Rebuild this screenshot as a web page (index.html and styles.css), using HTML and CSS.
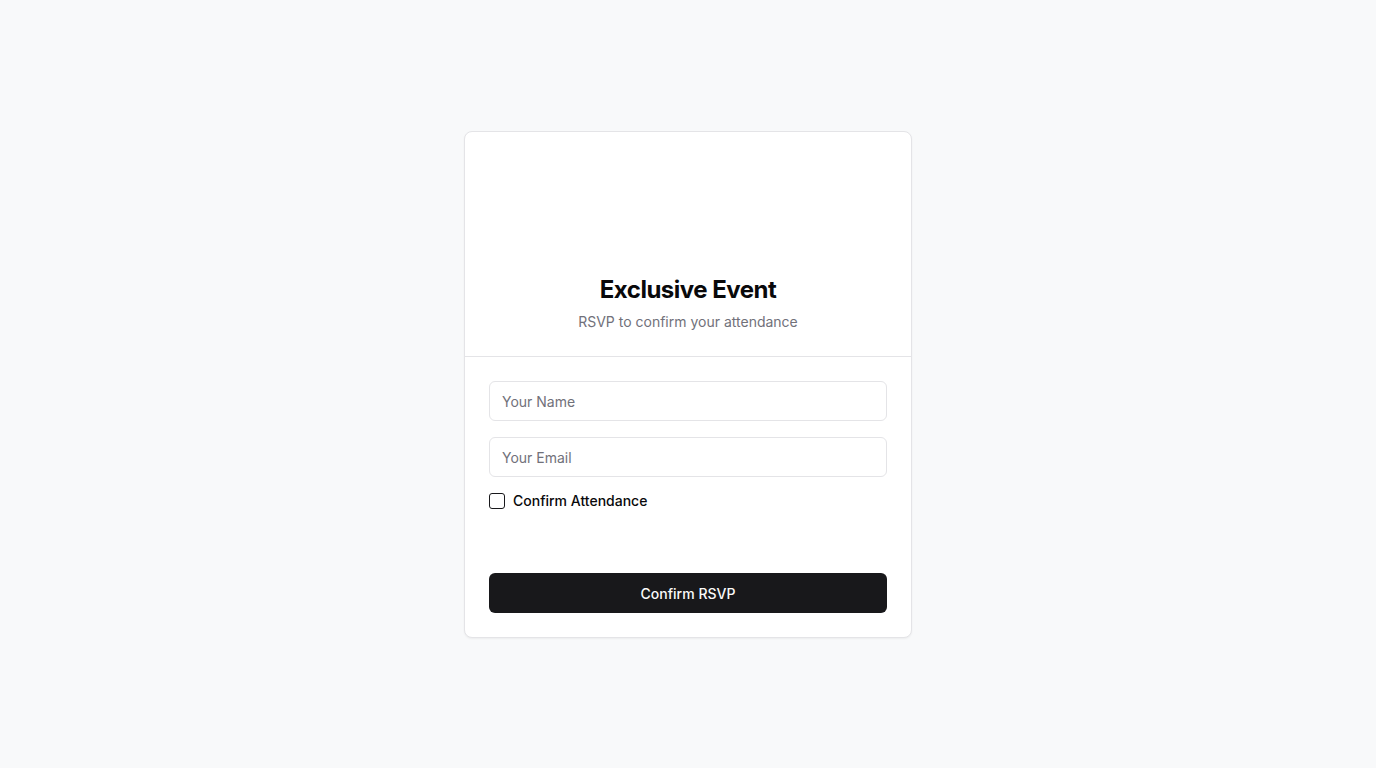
FILE: index.html
```html
<!DOCTYPE html>
<html lang="en">
<head>
<meta charset="utf-8">
<title>Exclusive Event RSVP</title>
<link rel="stylesheet" href="styles.css">
</head>
<body>
<main class="page">
  <div class="card">
    <div class="card-header">
      <div class="banner"></div>
      <h1 class="title">Exclusive Event</h1>
      <p class="subtitle">RSVP to confirm your attendance</p>
    </div>
    <form class="card-content">
      <input class="input" type="text" placeholder="Your Name">
      <input class="input" type="email" placeholder="Your Email">
      <label class="check-row">
        <span class="checkbox"></span>
        <span class="check-label">Confirm Attendance</span>
      </label>
      <button class="button" type="button">Confirm RSVP</button>
    </form>
  </div>
</main>
</body>
</html>
```
FILE: styles.css
```css
* { box-sizing: border-box; }
html, body { margin: 0; padding: 0; }
body {
  background: #f8f9fa;
  font-family: Inter, "Liberation Sans", sans-serif;
  color: #09090b;
}
.page {
  min-height: 768px;
  display: flex;
  justify-content: center;
  padding-top: 131px;
}
.card {
  width: 448px;
  height: 507px;
  background: #fff;
  border: 1px solid #e4e4e7;
  border-radius: 8px;
  box-shadow: 0 1px 2px rgba(0,0,0,0.05);
  display: flex;
  flex-direction: column;
}
.card-header {
  padding: 24px;
  border-bottom: 1px solid #e4e4e7;
  display: flex;
  flex-direction: column;
  align-items: center;
}
.banner {
  height: 118px;
  width: 100%;
}
.title {
  margin: 0;
  font-size: 24px;
  line-height: 32px;
  font-weight: 700;
  letter-spacing: -0.5px;
  color: #09090b;
}
.subtitle {
  margin: 6px 0 0;
  font-size: 14px;
  line-height: 20px;
  color: #71717a;
}
.card-content {
  padding: 24px;
  display: flex;
  flex-direction: column;
  margin: 0;
}
.input {
  height: 40px;
  width: 100%;
  border: 1px solid #e4e4e7;
  border-radius: 6px;
  padding: 0 12px;
  font-family: inherit;
  font-size: 14px;
  color: #09090b;
  background: #fff;
  margin: 0 0 16px;
  outline: none;
}
.input::placeholder { color: #71717a; }
.check-row {
  display: flex;
  align-items: center;
  gap: 8px;
  height: 20px;
  margin-top: -2px;
}
.checkbox {
  width: 16px;
  height: 16px;
  border: 1px solid #18181b;
  border-radius: 3px;
  background: #fff;
  flex: none;
}
.check-label {
  font-size: 14px;
  line-height: 20px;
  font-weight: 500;
  color: #09090b;
}
.button {
  margin-top: 62px;
  height: 40px;
  width: 100%;
  border: none;
  border-radius: 6px;
  background: #18181b;
  color: #fafafa;
  font-family: inherit;
  font-size: 14px;
  font-weight: 500;
  cursor: pointer;
}
```
